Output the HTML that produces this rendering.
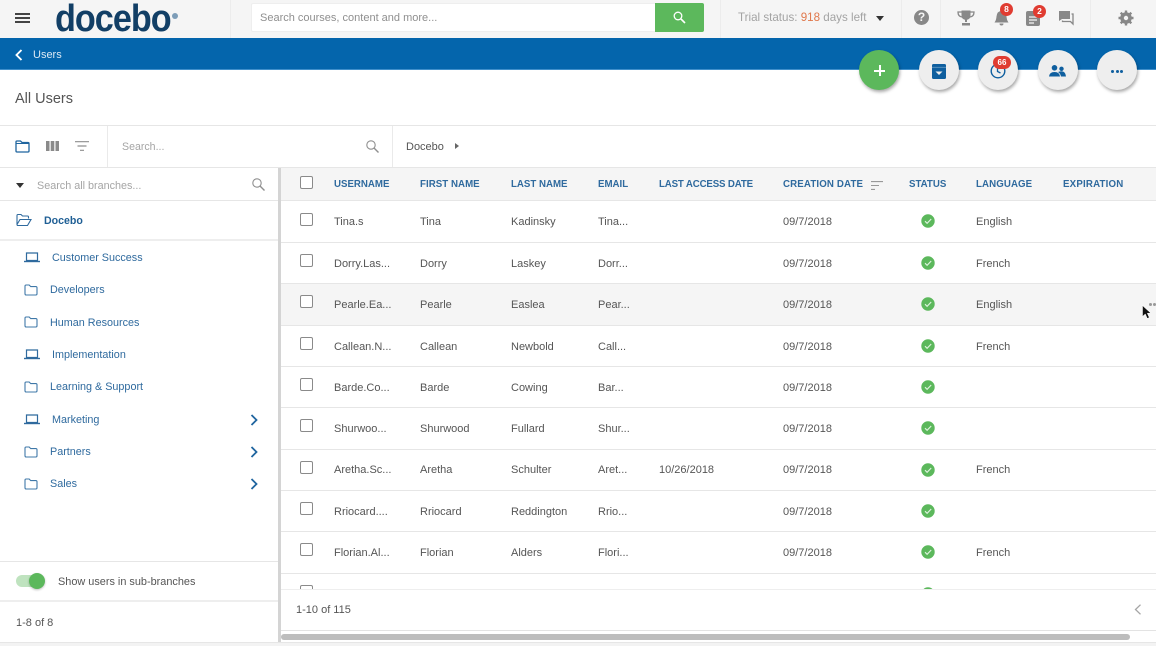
<!DOCTYPE html>
<html><head><meta charset="utf-8"><style>
*{box-sizing:border-box}
html,body{margin:0;padding:0;width:1156px;height:646px;overflow:hidden;background:#fff;font-family:"Liberation Sans",sans-serif;font-size:11px;color:#555}
.a{position:absolute}
.t{position:absolute;white-space:nowrap;line-height:14px;margin-top:1px}
.h{position:absolute;white-space:nowrap;line-height:14px;top:178px;color:#2f6a9e;font-weight:bold;font-size:9.7px}
.l{position:absolute;left:281px;width:875px;height:1px;background:#e6e6e6}
.cb{position:absolute;left:300px;width:13px;height:13px;border:1.5px solid #8a8a8a;border-radius:2px;background:#fff}
.ok{position:absolute;left:921px;width:14px;height:14px}
.br{position:absolute;color:#2f6a9e;white-space:nowrap;line-height:14px;font-size:10.8px;margin-top:1px}
.fab{position:absolute;top:50px;width:40px;height:40px;border-radius:50%;background:#eeeeee;box-shadow:1px 2px 3px rgba(0,0,0,.35)}
.bd{position:absolute;background:#e03c31;color:#fff;border-radius:50%;font-size:8px;font-weight:bold;text-align:center;line-height:13px;height:13px;width:13px}
svg{position:absolute;overflow:visible}
</style></head><body>
<svg width="0" height="0" style="position:absolute"><defs>
<symbol id="ck" viewBox="0 0 14 14"><circle cx="7" cy="7" r="6.7" fill="#5cb85c"/><path d="M4 7.2l2.1 2.1L10.2 5" fill="none" stroke="#dff3df" stroke-width="1.1"/></symbol>
<symbol id="fd" viewBox="0 0 14 12"><path d="M1 2.2q0-1.2 1.2-1.2h3l1.5 1.6h5.1q1.2 0 1.2 1.2v6q0 1.2-1.2 1.2H2.2Q1 11 1 9.800z" fill="none" stroke="#3f78a8" stroke-width="1.1"/></symbol>
<symbol id="lp" viewBox="0 0 16 11"><path d="M2.500 1h11v7.500h-11z" fill="none" stroke="#2f6a9e" stroke-width="1.200"/><path d="M0 9.500h16" stroke="#2f6a9e" stroke-width="1.400"/></symbol>
<symbol id="cv" viewBox="0 0 8 12"><path d="M1.500 1l5 5-5 5" fill="none" stroke="#1f659f" stroke-width="1.800"/></symbol>
</defs></svg>

<!-- top bar -->
<div class="a" style="left:0;top:0;width:1156px;height:38px;background:#f5f5f5"></div>
<div class="a" style="left:15px;top:13px;width:15px;height:2px;background:#444"></div>
<div class="a" style="left:15px;top:17px;width:15px;height:2px;background:#444"></div>
<div class="a" style="left:15px;top:21px;width:15px;height:2px;background:#444"></div>
<div class="a" style="left:55px;top:1.500px;font-size:38px;line-height:34px;font-weight:bold;color:#123f66;letter-spacing:-1.100px;white-space:nowrap;transform:scaleX(.9);transform-origin:0 0">docebo</div>
<div class="a" style="left:172px;top:13px;width:6px;height:6px;border-radius:50%;background:#7d9db8"></div>
<div class="a" style="left:230px;top:0;width:1px;height:38px;background:#ececec"></div>
<div class="a" style="left:251px;top:3px;width:405px;height:29px;background:#fff;border:1px solid #eee;border-radius:2px 0 0 2px"></div>
<div class="t" style="left:260px;top:10px;color:#8f8f8f;font-size:11px">Search courses, content and more...</div>
<div class="a" style="left:655px;top:3px;width:49px;height:29px;background:#5cb85c;border-radius:0 2px 2px 0"></div>
<svg style="left:673px;top:11px" width="13" height="13"><circle cx="5" cy="5" r="3.800" fill="none" stroke="#fff" stroke-width="1.300"/><path d="M8 8l4 4" stroke="#fff" stroke-width="1.600"/></svg>
<div class="a" style="left:720px;top:0;width:1px;height:38px;background:#ececec"></div>
<div class="t" style="left:738px;top:10px;color:#a3a3a3;font-size:11.6px">Trial status: <span style="color:#e0784c">918</span> days left</div>
<div class="a" style="left:876px;top:16px;border-left:4.500px solid transparent;border-right:4.500px solid transparent;border-top:5px solid #333"></div>
<div class="a" style="left:901px;top:0;width:1px;height:38px;background:#ececec"></div>
<div class="a" style="left:940px;top:0;width:1px;height:38px;background:#ececec"></div>
<div class="a" style="left:1090px;top:0;width:1px;height:38px;background:#ececec"></div>
<div class="a" style="left:914px;top:10px;width:15px;height:15px;border-radius:50%;background:#888;color:#f5f5f5;font-weight:bold;font-size:12px;line-height:15px;text-align:center">?</div>
<svg style="left:957px;top:10px" width="18" height="16"><path d="M4.500 0.500h9v5q0 4-4.500 4.500Q4.500 9.500 4.500 5.500z" fill="#888"/><path d="M4.500 2H1q0 4.500 4 5M13.500 2H17q0 4.500-4 5" fill="none" stroke="#888" stroke-width="1.300"/><path d="M8 9h2v3H8zM5 13h8v2.500H5z" fill="#888"/></svg>
<svg style="left:994px;top:10px" width="15" height="16"><path d="M7.500 1Q3 1 2.500 6.500Q2.300 10 0.500 12.500h14Q12.700 10 12.500 6.500Q12 1 7.500 1z" fill="#888"/><path d="M5.500 13.500a2 2 0 0 0 4 0z" fill="#888"/></svg>
<div class="bd" style="left:1000px;top:3px;font-size:8.500px">8</div>
<svg style="left:1026px;top:11px" width="14" height="15"><rect width="14" height="15" rx="2" fill="#888"/><path d="M3 6h8M3 9h8M3 12h5" stroke="#f5f5f5" stroke-width="1.200"/></svg>
<div class="bd" style="left:1033px;top:5px;font-size:8.500px">2</div>
<svg style="left:1059px;top:11px" width="15" height="14"><path d="M0 0h11v8H3l-3 2z" fill="#888"/><path d="M12.500 3H14v10l-2.500-2.500H3.500V9.500" fill="none" stroke="#888" stroke-width="1.300"/></svg>
<svg style="left:1118px;top:10px" width="16" height="16" viewBox="0 0 16 16"><circle cx="8" cy="8" r="4" fill="none" stroke="#888" stroke-width="3.600"/><path d="M8 0.500v3M8 12.500v3M0.500 8h3M12.500 8h3M2.700 2.700l2.100 2.100M11.200 11.200l2.100 2.100M13.300 2.700l-2.100 2.100M4.800 11.200l-2.100 2.100" stroke="#888" stroke-width="2.400"/></svg>

<!-- blue bar -->
<div class="a" style="left:0;top:38px;width:1156px;height:32px;background:#0465ac;border-bottom:1px solid #3f8fcb"></div>
<svg style="left:15px;top:49px" width="8" height="12"><path d="M6.500 1l-5 5 5 5" fill="none" stroke="#fff" stroke-width="1.900"/></svg>
<div class="t" style="left:33px;top:47px;color:#dbe9f4;font-size:11px">Users</div>

<div class="t" style="left:15px;top:89px;font-size:14.5px;line-height:18px;color:#555">All Users</div>

<!-- fabs -->
<div class="fab" style="left:859px;background:#5cb85c"></div>
<div class="a" style="left:874px;top:70px;width:11px;height:1.500px;background:#fff"></div>
<div class="a" style="left:879px;top:65px;width:1.500px;height:11px;background:#fff"></div>
<div class="fab" style="left:919px"></div>
<svg style="left:932px;top:64px" width="14" height="15"><rect width="14" height="15" rx="1.500" fill="#0f5f9f"/><path d="M0 3.300h14" stroke="#6a9cc4" stroke-width=".8"/><path d="M3.500 7.500h7L7 11z" fill="#eee"/></svg>
<div class="fab" style="left:978px"></div>
<svg style="left:990px;top:63px" width="16" height="16"><circle cx="8" cy="8" r="6.800" fill="none" stroke="#0f5f9f" stroke-width="1.400"/><path d="M7.500 4v4.500l3 1.500" fill="none" stroke="#0f5f9f" stroke-width="1.300"/></svg>
<div class="bd" style="left:993px;top:56px;width:18px;border-radius:7px">66</div>
<div class="fab" style="left:1038px"></div>
<svg style="left:1049px;top:65px" width="17" height="12"><circle cx="5.500" cy="2.800" r="2.800" fill="#0f5f9f"/><circle cx="12.500" cy="3.800" r="2.200" fill="#0f5f9f"/><path d="M0 11.500q.5-4.500 5.500-4.500t5.500 4.500z" fill="#0f5f9f"/><path d="M9 7q1.500-.8 3.500-.8 4 0 4.500 5.300h-5q-.5-2.800-3-4.500z" fill="#0f5f9f"/></svg>
<div class="fab" style="left:1097px"></div>
<div class="a" style="left:1111px;top:70px;width:3px;height:3px;border-radius:50%;background:#0f5f9f"></div>
<div class="a" style="left:1115.500px;top:70px;width:3px;height:3px;border-radius:50%;background:#0f5f9f"></div>
<div class="a" style="left:1120px;top:70px;width:3px;height:3px;border-radius:50%;background:#0f5f9f"></div>

<!-- toolbar -->
<div class="a" style="left:0;top:125px;width:1156px;height:1px;background:#e6e6e6"></div>
<div class="a" style="left:0;top:167px;width:1156px;height:1px;background:#e6e6e6"></div>
<div class="a" style="left:107px;top:126px;width:1px;height:41px;background:#eaeaea"></div>
<div class="a" style="left:392px;top:126px;width:1px;height:41px;background:#eaeaea"></div>
<svg style="left:15px;top:140px" width="15" height="13"><path d="M1 2q0-1 1-1h3.500l1.500 1.500h6q1 0 1 1V11q0 1-1 1H2q-1 0-1-1z" fill="none" stroke="#1f659f" stroke-width="1.300"/><path d="M1 3.500h13" stroke="#1f659f" stroke-width="1"/></svg>
<svg style="left:46px;top:141px" width="13" height="10"><path d="M0 0h3.500v10H0zM4.700 0h3.600v10H4.700zM9.500 0H13v10H9.500z" fill="#8a8a8a"/></svg>
<svg style="left:75px;top:141px" width="14" height="10"><path d="M0 .7h14M2.500 5h9M5 9.300h4" stroke="#8f8f8f" stroke-width="1.200"/></svg>
<div class="t" style="left:122px;top:139px;color:#a5a5a5;font-size:10.6px">Search...</div>
<svg style="left:366px;top:140px" width="13" height="13"><circle cx="5" cy="5" r="4.200" fill="none" stroke="#8f8f8f" stroke-width="1.100"/><path d="M8 8l4.500 4.500" stroke="#8f8f8f" stroke-width="1.400"/></svg>
<div class="t" style="left:406px;top:139px;color:#555">Docebo</div>
<div class="a" style="left:455px;top:143px;border-top:3.500px solid transparent;border-bottom:3.500px solid transparent;border-left:4px solid #666"></div>

<!-- left panel -->
<div class="a" style="left:278px;top:168px;width:3px;height:474px;background:#d4d4d4"></div>
<div class="a" style="left:16px;top:183px;border-left:4.500px solid transparent;border-right:4.500px solid transparent;border-top:5px solid #333"></div>
<div class="t" style="left:37px;top:178px;color:#a5a5a5;font-size:10.8px">Search all branches...</div>
<svg style="left:252px;top:178px" width="13" height="13"><circle cx="5" cy="5" r="4.200" fill="none" stroke="#8f8f8f" stroke-width="1.100"/><path d="M8 8l4.500 4.500" stroke="#8f8f8f" stroke-width="1.400"/></svg>
<div class="a" style="left:0;top:200px;width:278px;height:1px;background:#e6e6e6"></div>
<svg style="left:16px;top:214px" width="16" height="12"><path d="M1 10.500V1.500q0-1 1-1h3l1.500 1.500h5q1 0 1 1v1.500M1 10.500q0 1 1 1h9.500l3.500-6H4z" fill="none" stroke="#2f6a9e" stroke-width="1.100"/></svg>
<div class="t" style="left:44px;top:213px;color:#1f5f95;font-weight:bold;font-size:10.6px">Docebo</div>
<div class="a" style="left:0;top:239px;width:278px;height:2px;background:#eeeeee"></div>

<svg style="left:24px;top:252px" width="16" height="11"><use href="#lp"/></svg>
<div class="br" style="left:52px;top:250px">Customer Success</div>
<svg style="left:24px;top:284px" width="14" height="12"><use href="#fd"/></svg>
<div class="br" style="left:50px;top:282px">Developers</div>
<svg style="left:24px;top:316px" width="14" height="12"><use href="#fd"/></svg>
<div class="br" style="left:50px;top:315px">Human Resources</div>
<svg style="left:24px;top:349px" width="16" height="11"><use href="#lp"/></svg>
<div class="br" style="left:52px;top:347px">Implementation</div>
<svg style="left:24px;top:381px" width="14" height="12"><use href="#fd"/></svg>
<div class="br" style="left:50px;top:379px">Learning &amp; Support</div>
<svg style="left:24px;top:414px" width="16" height="11"><use href="#lp"/></svg>
<div class="br" style="left:52px;top:412px">Marketing</div>
<svg style="left:250px;top:414px" width="8" height="12"><use href="#cv"/></svg>
<svg style="left:24px;top:446px" width="14" height="12"><use href="#fd"/></svg>
<div class="br" style="left:50px;top:444px">Partners</div>
<svg style="left:250px;top:446px" width="8" height="12"><use href="#cv"/></svg>
<svg style="left:24px;top:478px" width="14" height="12"><use href="#fd"/></svg>
<div class="br" style="left:50px;top:476px">Sales</div>
<svg style="left:250px;top:478px" width="8" height="12"><use href="#cv"/></svg>

<div class="a" style="left:0;top:561px;width:278px;height:1px;background:#e6e6e6"></div>
<div class="a" style="left:16px;top:575px;width:26px;height:12px;border-radius:6px;background:#bfe3bf"></div>
<div class="a" style="left:29px;top:573px;width:16px;height:16px;border-radius:50%;background:#5cb85c;box-shadow:0 1px 2px rgba(0,0,0,.25)"></div>
<div class="t" style="left:58px;top:574px;color:#555;font-size:10.9px">Show users in sub-branches</div>
<div class="a" style="left:0;top:600px;width:278px;height:2px;background:#eeeeee"></div>
<div class="t" style="left:16px;top:615px;color:#555">1-8 of 8</div>

<!-- table header -->
<div class="a" style="left:281px;top:168px;width:875px;height:33px;background:#f5f5f5;border-bottom:1px solid #e6e6e6"></div>
<div class="cb" style="top:176px"></div>
<div class="h" style="left:334px">USERNAME</div>
<div class="h" style="left:420px;letter-spacing:.05px">FIRST NAME</div>
<div class="h" style="left:511px">LAST NAME</div>
<div class="h" style="left:598px">EMAIL</div>
<div class="h" style="left:659px;letter-spacing:-.15px">LAST ACCESS DATE</div>
<div class="h" style="left:783px;letter-spacing:.15px">CREATION DATE</div>
<svg style="left:871px;top:181px" width="12" height="9"><path d="M0 .6h12M0 4.500h8M0 8.400h4" stroke="#999" stroke-width="1.100"/></svg>
<div class="h" style="left:909px">STATUS</div>
<div class="h" style="left:976px;letter-spacing:.1px">LANGUAGE</div>
<div class="h" style="left:1063px;letter-spacing:.2px">EXPIRATION</div>

<!-- hover row -->
<div class="a" style="left:281px;top:284px;width:875px;height:41px;background:#f5f5f5"></div>
<div class="l" style="top:242px"></div><div class="l" style="top:283px"></div><div class="l" style="top:325px"></div><div class="l" style="top:366px"></div><div class="l" style="top:407px"></div><div class="l" style="top:449px"></div><div class="l" style="top:490px"></div><div class="l" style="top:531px"></div><div class="l" style="top:573px"></div>

<!-- rows -->
<div class="cb" style="top:213px"></div><div class="t" style="left:334px;top:214px">Tina.s</div><div class="t" style="left:420px;top:214px">Tina</div><div class="t" style="left:511px;top:214px">Kadinsky</div><div class="t" style="left:598px;top:214px">Tina...</div><div class="t" style="left:783px;top:214px">09/7/2018</div><svg class="ok" style="top:214px"><use href="#ck" width="14" height="14"/></svg><div class="t" style="left:976px;top:214px">English</div>

<div class="cb" style="top:254px"></div><div class="t" style="left:334px;top:256px">Dorry.Las...</div><div class="t" style="left:420px;top:256px">Dorry</div><div class="t" style="left:511px;top:256px">Laskey</div><div class="t" style="left:598px;top:256px">Dorr...</div><div class="t" style="left:783px;top:256px">09/7/2018</div><svg class="ok" style="top:256px"><use href="#ck" width="14" height="14"/></svg><div class="t" style="left:976px;top:256px">French</div>

<div class="cb" style="top:295px"></div><div class="t" style="left:334px;top:297px">Pearle.Ea...</div><div class="t" style="left:420px;top:297px">Pearle</div><div class="t" style="left:511px;top:297px">Easlea</div><div class="t" style="left:598px;top:297px">Pear...</div><div class="t" style="left:783px;top:297px">09/7/2018</div><svg class="ok" style="top:297px"><use href="#ck" width="14" height="14"/></svg><div class="t" style="left:976px;top:297px">English</div>

<div class="cb" style="top:337px"></div><div class="t" style="left:334px;top:339px">Callean.N...</div><div class="t" style="left:420px;top:339px">Callean</div><div class="t" style="left:511px;top:339px">Newbold</div><div class="t" style="left:598px;top:339px">Call...</div><div class="t" style="left:783px;top:339px">09/7/2018</div><svg class="ok" style="top:339px"><use href="#ck" width="14" height="14"/></svg><div class="t" style="left:976px;top:339px">French</div>

<div class="cb" style="top:378px"></div><div class="t" style="left:334px;top:380px">Barde.Co...</div><div class="t" style="left:420px;top:380px">Barde</div><div class="t" style="left:511px;top:380px">Cowing</div><div class="t" style="left:598px;top:380px">Bar...</div><div class="t" style="left:783px;top:380px">09/7/2018</div><svg class="ok" style="top:380px"><use href="#ck" width="14" height="14"/></svg>

<div class="cb" style="top:419px"></div><div class="t" style="left:334px;top:421px">Shurwoo...</div><div class="t" style="left:420px;top:421px">Shurwood</div><div class="t" style="left:511px;top:421px">Fullard</div><div class="t" style="left:598px;top:421px">Shur...</div><div class="t" style="left:783px;top:421px">09/7/2018</div><svg class="ok" style="top:421px"><use href="#ck" width="14" height="14"/></svg>

<div class="cb" style="top:461px"></div><div class="t" style="left:334px;top:462px">Aretha.Sc...</div><div class="t" style="left:420px;top:462px">Aretha</div><div class="t" style="left:511px;top:462px">Schulter</div><div class="t" style="left:598px;top:462px">Aret...</div><div class="t" style="left:659px;top:462px">10/26/2018</div><div class="t" style="left:783px;top:462px">09/7/2018</div><svg class="ok" style="top:463px"><use href="#ck" width="14" height="14"/></svg><div class="t" style="left:976px;top:462px">French</div>

<div class="cb" style="top:502px"></div><div class="t" style="left:334px;top:504px">Rriocard....</div><div class="t" style="left:420px;top:504px">Rriocard</div><div class="t" style="left:511px;top:504px">Reddington</div><div class="t" style="left:598px;top:504px">Rrio...</div><div class="t" style="left:783px;top:504px">09/7/2018</div><svg class="ok" style="top:504px"><use href="#ck" width="14" height="14"/></svg>

<div class="cb" style="top:543px"></div><div class="t" style="left:334px;top:545px">Florian.Al...</div><div class="t" style="left:420px;top:545px">Florian</div><div class="t" style="left:511px;top:545px">Alders</div><div class="t" style="left:598px;top:545px">Flori...</div><div class="t" style="left:783px;top:545px">09/7/2018</div><svg class="ok" style="top:545px"><use href="#ck" width="14" height="14"/></svg><div class="t" style="left:976px;top:545px">French</div>

<div class="cb" style="top:585px"></div><svg class="ok" style="top:587px"><use href="#ck" width="14" height="14"/></svg>

<!-- row dots + cursor -->
<div class="a" style="left:1149px;top:303px;width:3px;height:3px;border-radius:50%;background:#999"></div>
<div class="a" style="left:1153px;top:303px;width:3px;height:3px;border-radius:50%;background:#999"></div>
<svg style="left:1142px;top:305px" width="9" height="15"><path d="M.5 .5v11l2.800-2.500 2 4.500 2-1-2-4.300h3.500z" fill="#111" stroke="#fff" stroke-width=".5"/></svg>

<!-- table footer -->
<div class="a" style="left:281px;top:589px;width:875px;height:42px;background:#fff;border-top:1px solid #eeeeee;border-bottom:1px solid #e3e3e3"></div>
<div class="t" style="left:296px;top:602px;color:#555">1-10 of 115</div>
<svg style="left:1134px;top:604px" width="8" height="11"><path d="M6.500 .7L1.500 5.500l5 4.800" fill="none" stroke="#a5a5a5" stroke-width="1.300"/></svg>
<div class="a" style="left:281px;top:631px;width:875px;height:11px;background:#fff"></div>
<div class="a" style="left:281px;top:634px;width:849px;height:6px;border-radius:3px;background:#bdbdbd"></div>
<div class="a" style="left:0;top:642px;width:1156px;height:4px;background:#f3f3f3;border-top:1px solid #e6e6e6"></div>
</body></html>
